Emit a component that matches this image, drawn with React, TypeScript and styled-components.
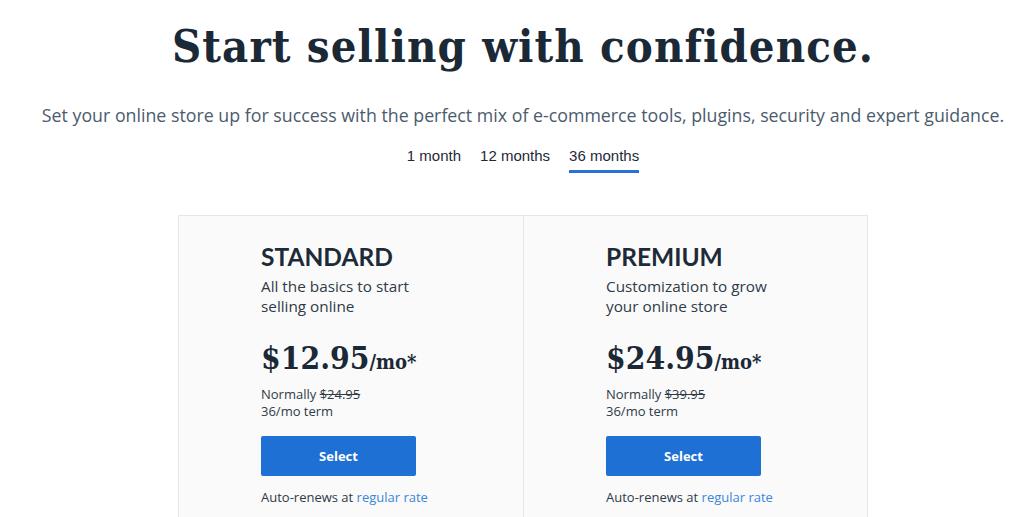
import React, { useState } from 'react'
import styled, { createGlobalStyle } from 'styled-components'

const GlobalStyle = createGlobalStyle`
  html, body {
    margin: 0;
    padding: 0;
    background: #ffffff;
  }
  body {
    font-family: 'Open Sans', 'Liberation Sans', sans-serif;
    color: #1d2a38;
  }
`

const Page = styled.main`
  width: 1024px;
  height: 517px;
  box-sizing: border-box;
  padding-left: 22px;
  overflow: hidden;
  display: flex;
  flex-direction: column;
  align-items: center;
`

const Title = styled.h1`
  margin: 17px 0 0;
  font-family: 'DejaVu Serif Condensed', 'DejaVu Serif', serif;
  font-stretch: condensed;
  font-weight: 700;
  font-size: 45px;
  line-height: 60px;
  letter-spacing: 1.1px;
  color: #1b2836;
  white-space: nowrap;
`

const Subtitle = styled.p`
  margin: 26px 0 0;
  font-family: 'Open Sans', sans-serif;
  font-size: 17.8px;
  line-height: 24px;
  color: #4b5b6d;
  white-space: nowrap;
`

const Tabs = styled.nav`
  display: flex;
  gap: 19px;
  margin-top: 20px;
`

const Tab = styled.button<{ $active?: boolean }>`
  border: 0;
  background: none;
  padding: 0 0 5px;
  font-family: 'Liberation Sans', Arial, sans-serif;
  font-size: 15px;
  line-height: 18px;
  color: #1d2a38;
  cursor: pointer;
  border-bottom: 3px solid ${p => (p.$active ? '#2a73d4' : 'transparent')};
`

const Plans = styled.section`
  margin-top: 42px;
  display: grid;
  grid-template-columns: 344px 344px;
  border: 1px solid #e4e6e8;
  background: #fafafa;
`

const Plan = styled.div<{ $first?: boolean }>`
  padding: 26px 0 0 82px;
  border-left: ${p => (p.$first ? '0' : '1px solid #e4e6e8')};
  height: 320px;
`

const PlanName = styled.h2`
  margin: 0;
  font-family: 'Lato', sans-serif;
  font-weight: 700;
  font-size: 24.5px;
  line-height: 30px;
  color: #1d2a38;
`

const PlanDesc = styled.p`
  margin: 4px 0 0;
  width: 175px;
  font-family: 'Open Sans', sans-serif;
  font-size: 15.3px;
  line-height: 20px;
  color: #2f3b47;
`

const Price = styled.div`
  margin-top: 23px;
  font-family: 'DejaVu Serif Condensed', 'DejaVu Serif', serif;
  font-stretch: condensed;
  font-weight: 700;
  font-size: 31.5px;
  line-height: 38px;
  color: #1b2836;
`

const Per = styled.span`
  font-size: 20px;
`

const Note = styled.p`
  margin: 5px 0 0;
  font-family: 'Open Sans', sans-serif;
  font-size: 13px;
  line-height: 17px;
  color: #2f3b47;
`

const Strike = styled.s`
  text-decoration-thickness: 1px;
`

const SelectButton = styled.button`
  display: block;
  margin-top: 16px;
  width: 155px;
  height: 40px;
  border: 0;
  border-radius: 2px;
  background: #1f70d4;
  color: #ffffff;
  font-family: 'Open Sans', sans-serif;
  font-weight: 700;
  font-size: 13px;
  cursor: pointer;
`

const Renew = styled.p`
  margin: 12px 0 0;
  font-family: 'Open Sans', sans-serif;
  font-size: 13px;
  line-height: 18px;
  color: #2f3b47;
`

const RateLink = styled.a`
  color: #3a86db;
  text-decoration: none;
`

const plans = [
  { name: 'STANDARD', desc: 'All the basics to start selling online', price: '$12.95', normal: '$24.95' },
  { name: 'PREMIUM', desc: 'Customization to grow your online store', price: '$24.95', normal: '$39.95' },
]

const terms = ['1 month', '12 months', '36 months']

export default function App() {
  const [term, setTerm] = useState(2)
  return (
    <>
      <GlobalStyle />
      <Page>
        <Title>Start selling with confidence.</Title>
        <Subtitle>
          Set your online store up for success with the perfect mix of e-commerce tools, plugins, security and expert guidance.
        </Subtitle>
        <Tabs>
          {terms.map((t, i) => (
            <Tab key={t} $active={i === term} onClick={() => setTerm(i)}>
              {t}
            </Tab>
          ))}
        </Tabs>
        <Plans>
          {plans.map((p, i) => (
            <Plan key={p.name} $first={i === 0}>
              <PlanName>{p.name}</PlanName>
              <PlanDesc>{p.desc}</PlanDesc>
              <Price>
                {p.price}
                <Per>/mo*</Per>
              </Price>
              <Note>
                Normally <Strike>{p.normal}</Strike>
                <br />
                36/mo term
              </Note>
              <SelectButton>Select</SelectButton>
              <Renew>
                Auto-renews at <RateLink href="#">regular rate</RateLink>
              </Renew>
            </Plan>
          ))}
        </Plans>
      </Page>
    </>
  )
}
